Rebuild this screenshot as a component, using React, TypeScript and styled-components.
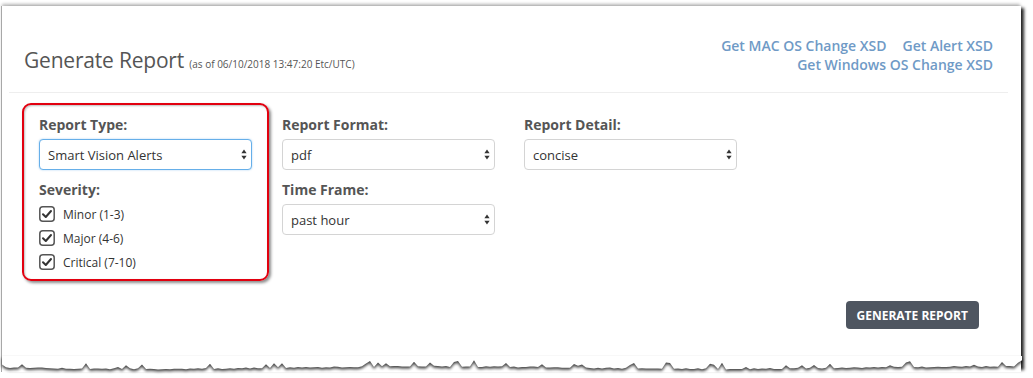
import React from "react";
import styled, { createGlobalStyle } from "styled-components";

const GlobalStyle = createGlobalStyle`
  html, body {
    margin: 0;
    padding: 0;
    background: #fff;
  }
  body {
    font-family: "Open Sans", "Liberation Sans", Arial, sans-serif;
    color: #555;
  }
`;

const Frame = styled.div`
  padding-top: 6px;
  width: 1033px;
  height: 378px;
  box-sizing: border-box;
  overflow: hidden;
`;

const Paper = styled.div`
  margin-left: 1px;
  width: 1020px;
  border-left: 1px solid #a8a8a8;
  background: #fff;
  box-shadow: 0 -3px 3px -1px rgba(0, 0, 0, 0.28), 5px 0 3px -2px rgba(0, 0, 0, 0.85);
  padding: 0 13px 0 7px;
  box-sizing: border-box;
  display: flex;
  flex-direction: column;
`;

const Header = styled.div`
  display: flex;
  justify-content: space-between;
  align-items: flex-end;
  padding: 30px 15px 14px;
  border-bottom: 1px solid #eee;
`;

const Title = styled.h1`
  margin: 0;
  font-size: 21px;
  line-height: 28px;
  font-weight: 400;
  letter-spacing: -0.2px;
  color: #555;

  small {
    font-size: 10px;
    letter-spacing: 0;
    color: #555;
  }
`;

const Links = styled.div`
  display: flex;
  flex-direction: column;
  align-items: flex-end;
  padding-bottom: 4px;
  font-size: 14px;
  line-height: 19px;
  font-weight: 600;
`;

const LinkRow = styled.div`
  display: flex;
  gap: 16px;
`;

const Link = styled.a`
  color: #6f9ac6;
  text-decoration: none;
  cursor: pointer;
`;

const FormRow = styled.div`
  display: flex;
  align-items: flex-start;
  padding-left: 30px;
  margin-top: 22px;
`;

const Column = styled.div`
  width: 213px;
  margin-right: 29px;
  display: flex;
  flex-direction: column;
`;

const Highlight = styled.div`
  margin: -12px 13px -5px -17px;
  padding: 10px 15px 5px;
  border: 2px solid #e2000f;
  border-radius: 9px;
  box-shadow: 2px 2px 3px rgba(0, 0, 0, 0.45), inset 1px 1px 2px rgba(0, 0, 0, 0.25);
  display: flex;
  flex-direction: column;
  width: 213px;
`;

const Label = styled.label<{ $first?: boolean; $tight?: boolean }>`
  display: block;
  font-size: 14px;
  line-height: 20px;
  font-weight: 700;
  color: #555;
  margin: ${(p) => (p.$first ? "0" : "10px")} 0 ${(p) => (p.$tight ? "2px" : "4px")};
`;

const SelectWrap = styled.div`
  position: relative;
  width: 213px;
`;

const Select = styled.select<{ $focused?: boolean }>`
  appearance: none;
  -webkit-appearance: none;
  width: 100%;
  height: 31px;
  box-sizing: border-box;
  padding: 0 20px 0 8px;
  font-family: "Open Sans", "Liberation Sans", Arial, sans-serif;
  font-size: 13px;
  color: #333;
  background: #fff;
  border: 1px solid ${(p) => (p.$focused ? "#66afe9" : "#d4d4d4")};
  border-radius: 4px;
  box-shadow: ${(p) => (p.$focused ? "0 0 2px rgba(102, 175, 233, 0.6)" : "none")};
  outline: none;
`;

const Arrows = styled.svg`
  position: absolute;
  right: 5px;
  top: 10px;
  pointer-events: none;
`;

const CheckRow = styled.label`
  display: flex;
  align-items: center;
  gap: 8px;
  height: 24px;
  font-size: 12px;
  color: #333;
`;

const ButtonRow = styled.div`
  display: flex;
  justify-content: flex-end;
  padding-right: 29px;
  margin-top: 25px;
`;

const Button = styled.button`
  height: 28px;
  padding: 0 11px;
  border: none;
  border-radius: 4px;
  background: #4e5560;
  color: #fff;
  font-family: "Open Sans", "Liberation Sans", Arial, sans-serif;
  font-size: 12px;
  font-weight: 700;
  cursor: pointer;
`;

const TornEdge = styled.svg`
  display: block;
  margin: 27px -13px 0 -7px;
  filter: drop-shadow(0 2px 1.5px rgba(0, 0, 0, 0.75));
`;

function SelectBox({ value, options, focused }: { value: string; options: string[]; focused?: boolean }) {
  return (
    <SelectWrap>
      <Select $focused={focused} defaultValue={value}>
        {options.map((o) => (
          <option key={o}>{o}</option>
        ))}
      </Select>
      <Arrows width="6" height="11" viewBox="0 0 6 11">
        <path d="M3 0.5 L5.6 4.3 L0.4 4.3 Z" fill="#333" />
        <path d="M3 10.5 L5.6 6.7 L0.4 6.7 Z" fill="#333" />
      </Arrows>
    </SelectWrap>
  );
}

function Check({ label }: { label: string }) {
  return (
    <CheckRow>
      <svg width="16" height="16" viewBox="0 0 16 16">
        <rect x="0.8" y="0.8" width="14.4" height="14.4" rx="3" fill="#fff" stroke="#555" strokeWidth="1.5" />
        <path d="M4 8.2 L6.8 11 L12 5" fill="none" stroke="#333" strokeWidth="2" strokeLinecap="round" strokeLinejoin="round" />
      </svg>
      {label}
    </CheckRow>
  );
}

function tornPath() {
  let seed = 11;
  const rnd = () => {
    seed = (seed * 9301 + 49297) % 233280;
    return seed / 233280;
  };
  const pts: string[] = [];
  for (let x = 0; x <= 1020; x += 4) {
    let y = 11 + 1.2 * Math.sin(x * 0.011) + rnd() * 1.2;
    if (rnd() > 0.82) y -= 2 + rnd() * 4;
    pts.push(`${x},${y.toFixed(1)}`);
  }
  return `M1020,0 L0,0 L${pts.join(" L")} Z`;
}

export default function App() {
  return (
    <>
      <GlobalStyle />
      <Frame>
        <Paper>
          <Header>
            <Title>
              Generate Report <small>(as of 06/10/2018 13:47:20 Etc/UTC)</small>
            </Title>
            <Links>
              <LinkRow>
                <Link>Get MAC OS Change XSD</Link>
                <Link>Get Alert XSD</Link>
              </LinkRow>
              <Link>Get Windows OS Change XSD</Link>
            </Links>
          </Header>

          <FormRow>
            <Highlight>
              <Label $first>Report Type:</Label>
              <SelectBox value="Smart Vision Alerts" options={["Smart Vision Alerts", "OS Changes"]} focused />
              <Label $tight>Severity:</Label>
              <Check label="Minor (1-3)" />
              <Check label="Major (4-6)" />
              <Check label="Critical (7-10)" />
            </Highlight>
            <Column>
              <Label $first>Report Format:</Label>
              <SelectBox value="pdf" options={["pdf", "csv", "xml"]} />
              <Label>Time Frame:</Label>
              <SelectBox value="past hour" options={["past hour", "past day", "past week"]} />
            </Column>
            <Column>
              <Label $first>Report Detail:</Label>
              <SelectBox value="concise" options={["concise", "detailed"]} />
            </Column>
          </FormRow>

          <ButtonRow>
            <Button>GENERATE REPORT</Button>
          </ButtonRow>

          <TornEdge width="1020" height="16" viewBox="0 0 1020 16">
            <path d={tornPath()} fill="#fff" />
          </TornEdge>
        </Paper>
      </Frame>
    </>
  );
}
